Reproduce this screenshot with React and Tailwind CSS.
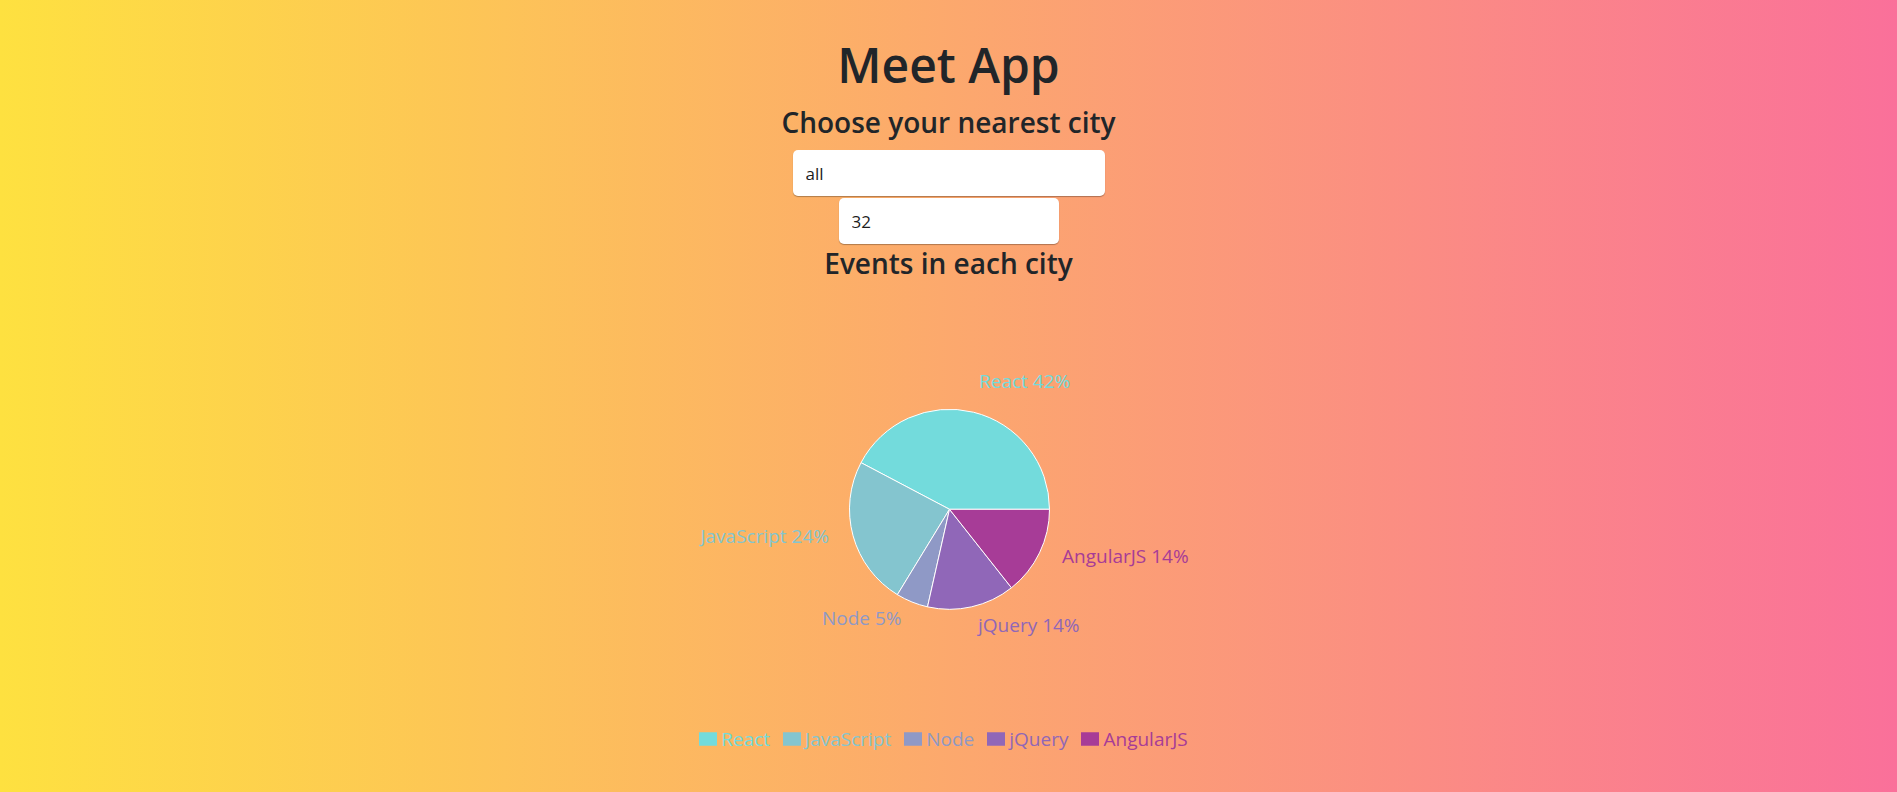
import React from "react";

const cx = 250.5;
const cy = 229.3;
const r = 100;

// slice boundaries in degrees, counter-clockwise from 3 o'clock
const slices = [
  { name: "React", pct: 42, from: 0, to: 152.2, color: "#73dbdc", label: { x: 280, y: 108, anchor: "start" } },
  { name: "JavaScript", pct: 24, from: 152.2, to: 238.6, color: "#84c5cf", label: { x: 130, y: 263, anchor: "end" } },
  { name: "Node", pct: 5, from: 238.6, to: 257.3, color: "#8f99c6", label: { x: 202.5, y: 345, anchor: "end" } },
  { name: "jQuery", pct: 14, from: 257.3, to: 308.3, color: "#9067b8", label: { x: 279, y: 352, anchor: "start" } },
  { name: "AngularJS", pct: 14, from: 308.3, to: 360, color: "#a73c97", label: { x: 363, y: 283, anchor: "start" } },
];

function point(deg) {
  const rad = (deg * Math.PI) / 180;
  return [cx + r * Math.cos(rad), cy - r * Math.sin(rad)];
}

function slicePath(from, to) {
  const [x1, y1] = point(from);
  const [x2, y2] = point(to);
  const large = to - from > 180 ? 1 : 0;
  return `M${cx},${cy} L${x1.toFixed(2)},${y1.toFixed(2)} A${r},${r} 0 ${large} 0 ${x2.toFixed(2)},${y2.toFixed(2)} Z`;
}

function EventGenresChart() {
  return (
    <div className="w-[500px] mx-auto">
      <svg width="500" height="446" className="block">
        {slices.map((s) => (
          <path key={s.name} d={slicePath(s.from, s.to)} fill={s.color} stroke="#fff" strokeWidth="1" />
        ))}
        {slices.map((s) => (
          <text
            key={s.name + "-label"}
            x={s.label.x}
            y={s.label.y}
            textAnchor={s.label.anchor}
            fill={s.color}
            fontSize="19"
          >
            {s.name} {s.pct}%
          </text>
        ))}
      </svg>
      <ul className="flex justify-center items-center gap-[13px] pr-[10px] h-[26px]">
        {slices.map((s) => (
          <li key={s.name + "-legend"} className="flex items-center">
            <svg width="18" height="18" viewBox="0 0 32 32" className="mr-[4px]">
              <path d="M0,4h32v24h-32z" fill={s.color} />
            </svg>
            <span className="text-[19px] leading-[26px]" style={{ color: s.color }}>
              {s.name}
            </span>
          </li>
        ))}
      </ul>
    </div>
  );
}

export default function App() {
  return (
    <div className="min-h-screen bg-[linear-gradient(to_right,#fee140,#fa709a)] font-['Open_Sans',sans-serif] text-[#212529]">
      <div className="flex flex-col items-center pt-[37px]">
        <h1 className="text-[48px] leading-[56px] font-semibold">Meet App</h1>
        <h3 className="mt-[12px] text-[28px] leading-[34px] font-semibold">Choose your nearest city</h3>
        <input
          type="text"
          defaultValue="all"
          className="mt-[11px] w-[312px] h-[46px] px-[13px] rounded-[5px] bg-white text-[17px] text-[#1d1d1d] shadow-[0_1px_1px_rgba(0,0,0,0.3)] outline-none"
        />
        <input
          type="number"
          defaultValue="32"
          className="mt-[2px] w-[220px] h-[46px] px-[13px] rounded-[5px] bg-white text-[17px] text-[#1d1d1d] shadow-[0_1px_1px_rgba(0,0,0,0.3)] outline-none appearance-none [&::-webkit-inner-spin-button]:appearance-none"
        />
        <h3 className="mt-[2px] text-[28px] leading-[34px] font-semibold">Events in each city</h3>
      </div>
      <EventGenresChart />
    </div>
  );
}
